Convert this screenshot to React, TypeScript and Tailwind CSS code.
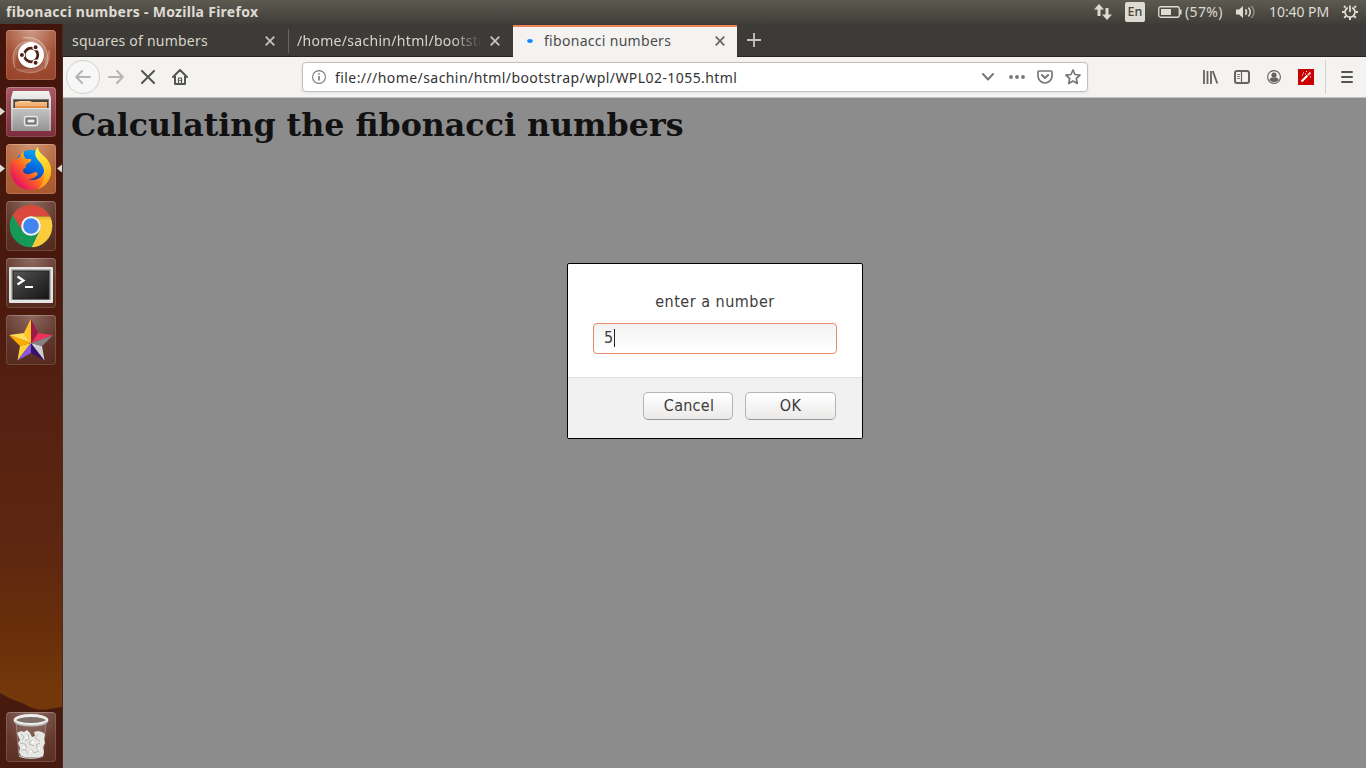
import React from "react";

const Close = ({ color }: { color: string }) => (
  <svg width="10" height="10" viewBox="0 0 10 10" className="shrink-0">
    <path d="M.7.7l8.6 8.6M9.3.7L.7 9.3" stroke={color} strokeWidth="1.7" fill="none" />
  </svg>
);

const Dots = () => (
  <svg width="50" height="50" viewBox="0 0 50 50">
    <defs>
      <clipPath id="ub"><rect x="1" y="1" width="48" height="48" rx="3" /></clipPath>
    </defs>
    <g clipPath="url(#ub)" fill="none" stroke="#fff">
      <path d="M9 38C3 22 12 9 27 12" strokeOpacity=".3" strokeWidth="1.2" />
      <path d="M17 8c18-4 30 14 22 31" strokeOpacity=".35" strokeWidth="1.2" />
      <path d="M43 20c3 19-14 28-33 19" strokeOpacity=".25" strokeWidth="1.2" />
      <path d="M9 38C3 22 12 9 27 12C15 14 9 24 9 38z" fill="#fff" fillOpacity=".15" stroke="none" />
      <path d="M17 8c18-4 30 14 22 31C41 24 32 12 17 8z" fill="#fff" fillOpacity=".18" stroke="none" />
      <path d="M43 20c3 19-14 28-33 19c15 2 27-4 33-19z" fill="#fff" fillOpacity=".15" stroke="none" />
    </g>
    <circle cx="25" cy="26" r="13" fill="#3a1208" opacity=".35" />
    <circle cx="25" cy="25" r="13" fill="#fff" />
    <circle cx="25" cy="25" r="6.8" fill="none" stroke="#4e2013" strokeWidth="2.7" />
    <g stroke="#fff" strokeWidth="1.2" fill="#4e2013">
      <circle cx="15.9" cy="25" r="2.6" />
      <circle cx="29.6" cy="17.2" r="2.6" />
      <circle cx="29.6" cy="32.8" r="2.6" />
    </g>
  </svg>
);

const Files = () => (
  <svg width="50" height="50" viewBox="0 0 50 50">
    <defs>
      <linearGradient id="fa" x2="0" y2="1"><stop stopColor="#f3f3f1" /><stop offset="1" stopColor="#aaa" /></linearGradient>
      <linearGradient id="fb" x2="0" y2="1"><stop stopColor="#c4c4c3" /><stop offset="1" stopColor="#939393" /></linearGradient>
      <linearGradient id="fc" x2="0" y2="1"><stop stopColor="#ffd39c" /><stop offset="1" stopColor="#d9752b" /></linearGradient>
    </defs>
    <path d="M7 4h36l2 7v33H5V11z" fill="url(#fa)" />
    <path d="M7 12h36v31H7z" fill="#777" />
    <path d="M8 13h34v9H8z" fill="#49403a" />
    <path d="M9 15l5-1h10l2 1h15v7H9z" fill="url(#fc)" />
    <path d="M9 18h32" stroke="#f6bd85" />
    <path d="M7 21h36v23H7z" fill="url(#fb)" />
    <path d="M7 21.5h36" stroke="#e4e4e4" />
    <rect x="18.5" y="29.5" width="13" height="9" rx="2" fill="#8b8b8b" stroke="#e7e7e7" strokeWidth="1.4" />
    <rect x="21" y="32" width="8" height="4" fill="#eee" stroke="#5d5d5d" />
  </svg>
);

const Fox = () => (
  <svg width="50" height="50" viewBox="0 0 50 50">
    <defs>
      <linearGradient id="xa" x1=".9" y1=".1" x2=".15" y2=".8"><stop stopColor="#fff04a" /><stop offset=".3" stopColor="#ffc21c" /><stop offset=".6" stopColor="#ff6a20" /><stop offset="1" stopColor="#e8145f" /></linearGradient>
      <linearGradient id="xb" x1=".7" y1="0" x2=".3" y2="1"><stop stopColor="#00a9ff" /><stop offset=".6" stopColor="#0660d8" /><stop offset="1" stopColor="#2b167c" /></linearGradient>
      <linearGradient id="xc" x1=".4" y1="0" x2=".6" y2="1"><stop stopColor="#fff44c" /><stop offset=".6" stopColor="#ffc51e" /><stop offset="1" stopColor="#ff921c" /></linearGradient>
    </defs>
    <circle cx="25" cy="22" r="16" fill="url(#xb)" />
    <path d="M4 23c0-5 2-8 4-10l1 4c1-2 3-3 5-4 0-3 2-5 4-6-1 3 0 6 2 8h5c1 2-1 3-4 5-1 1-2 2-1 4-2 0-3 1-3 3 2 5 8 3 12 1 4 0 3 4 0 5-2 2-5 2-7 2 7 3 15-1 16-8 1-5-1-10-4-13 6 1 9 6 9 9l2 5c-1 10-9 18-20 18C12 46 4 36 4 23z" fill="url(#xa)" />
    <path d="M32 3c0 5 4 7 7 10 4 4 7 9 6 16-1 8-6 14-13 16 6-6 7-12 6-19-1-6-6-9-8-13-2-4 0-8 2-10z" fill="url(#xc)" />
  </svg>
);

const Chrome = () => (
  <svg width="50" height="50" viewBox="0 0 50 50">
    <defs><clipPath id="ch"><circle cx="25" cy="25" r="21.3" /></clipPath></defs>
    <g clipPath="url(#ch)">
      <rect width="50" height="50" fill="#159957" />
      <path d="M25 15.5H50V50H24L33.5 30z" fill="#fdcb3e" />
      <path d="M0 0h50v15.5H25L16.5 30 6.5 14z" fill="#d9473d" />
      <path d="M25 15.5h20v3H28z" fill="#d29c28" opacity=".35" />
    </g>
    <circle cx="25" cy="25" r="9.8" fill="#f4f4f4" />
    <circle cx="25" cy="25" r="7.8" fill="#4285ee" />
  </svg>
);

const Term = () => (
  <svg width="50" height="50" viewBox="0 0 50 50">
    <defs><linearGradient id="ta" x2="1" y2="1"><stop stopColor="#555" /><stop offset=".5" stopColor="#333" /><stop offset="1" stopColor="#151515" /></linearGradient></defs>
    <rect x="3" y="9" width="44" height="36" rx="1" fill="#e4e4e4" />
    <rect x="5" y="11" width="40" height="31" fill="#b2b2b2" />
    <rect x="7" y="13" width="36" height="28" fill="url(#ta)" stroke="#222" />
    <path d="M11.5 18.500l6 4-6 4" fill="none" stroke="#fff" strokeWidth="2.2" />
    <path d="M19 29h8" stroke="#fff" strokeWidth="2" />
  </svg>
);

const Star = () => (
  <svg width="50" height="50" viewBox="0 0 50 50">
    <path d="M25 4v24l-7-10z" fill="#ffd957" />
    <path d="M3 20l15-2 7 10z" fill="#ffdc55" />
    <path d="M3 20l22 8-11 3z" fill="#ffac00" />
    <path d="M11.500 45.500L14 31l11-3z" fill="#ffd338" />
    <path d="M11.500 45.500L25 28v10z" fill="#8859e0" />
    <path d="M25 28l13.500 17.500L25 38z" fill="#35106d" />
    <path d="M25 28l11 3 2.500 14.500z" fill="#cecdd0" />
    <path d="M25 28l22-8-11 11z" fill="#858286" />
    <path d="M25 28l7-10 15 2z" fill="#ec315a" />
    <path d="M25 4l7 14-7 10z" fill="#9c1949" />
    <path d="M25 4l-7 14 7 10z" fill="#ffb400" opacity=".55" />
  </svg>
);

const Trash = () => (
  <svg width="50" height="50" viewBox="0 0 50 50">
    <path d="M10 10l3 34c5 3 19 3 24 0l3-34z" fill="#efe9e7" fillOpacity=".1" stroke="#ddd" strokeOpacity=".35" />
    <g fill="#e6e6e3">
      <path d="M11 21l4-2 3 1 3-2 3 3 2 4 3-1-1-4 4-1 4 1 3 2-1 5 1 4-2 4 1 5-1 4c-6 2-16 2-22 0l-2-4 1-4-2-5 2-3z" />
    </g>
    <path d="M15 22l3 3-2 3M22 22l1 5-4 2M32 22l-3 4 5 3M14 31l5 1 2 4M25 28l-2 4 5 2M34 31l-4 2 2 5M15 39l4-2 3 5M25 37l3 4 5-2" fill="none" stroke="#b9bab4" />
    <path d="M20 25l2 1M26 31l2-1M17 35l2 1M32 36l2 1M24 40l2-1" fill="none" stroke="#fff" strokeWidth="1.500" />
    <path d="M13 44c5 3 19 3 24 0" stroke="#c4d0c8" fill="none" />
    <ellipse cx="25" cy="8" rx="16" ry="4.500" fill="#7d6f69" stroke="#eeeeed" strokeWidth="2.800" />
    <path d="M9 10c4 5 28 5 32 0" stroke="#b9bebb" fill="none" strokeWidth="1.500" />
  </svg>
);

const Tile = ({ children, className }: { children: React.ReactNode; className: string }) => (
  <div className={`h-[50px] w-[50px] shrink-0 overflow-hidden rounded-[4px] shadow-[inset_0_0_0_1px_rgba(255,255,255,.14),inset_0_1px_0_rgba(255,255,255,.12)] ${className}`}>{children}</div>
);

const Arrow = ({ left, top, flip }: { left: string; top: string; flip?: boolean }) => (
  <svg width="5" height="9" viewBox="0 0 5 9" className={`absolute ${left} ${top}`}>
    <path d={flip ? "M5 .5v8L0 4.500z" : "M0 .5v8L5 4.500z"} fill="#dfdbd5" />
  </svg>
);

function Launcher() {
  return (
    <aside className="relative flex w-[63px] shrink-0 flex-col items-center gap-[7px] border-r border-[#4b2a22] bg-[linear-gradient(180deg,#42150c_0%,#4a190d_35%,#542011_50%,#5f2710_72%,#6a300a_83%,#74380a_90%,#74340a_100%)] pt-1.5 pr-px">
      <svg className="absolute bottom-0 left-0" width="62" height="75" viewBox="0 0 62 75">
        <path d="M0 0C6 3 10 6 17 8C24 10 30 15 36 16C46 18 52 15 62 14V75H0z" fill="#471a10" />
      </svg>
      <Tile className="bg-[radial-gradient(circle_at_50%_0%,#cf9a86,#a25035_55%,#96422a)]"><Dots /></Tile>
      <Tile className="bg-[linear-gradient(180deg,#a95a66,#7c2c3b)]"><Files /></Tile>
      <Tile className="bg-[radial-gradient(circle_at_50%_0%,#cf9472,#b06036_65%,#a7582f)]"><Fox /></Tile>
      <Tile className="bg-[radial-gradient(circle_at_50%_0%,#8d6a60,#5f3327_60%,#54291d)]"><Chrome /></Tile>
      <Tile className="bg-[radial-gradient(circle_at_50%_0%,#8d6a60,#5f3327_60%,#54291d)]"><Term /></Tile>
      <Tile className="bg-[radial-gradient(circle_at_50%_0%,#8d6a60,#5f3327_60%,#54291d)]"><Star /></Tile>
      <Tile className="relative mt-auto mb-1.5 bg-[radial-gradient(circle_at_50%_0%,#8d6a60,#653a2e_60%,#5b2f24)]"><Trash /></Tile>
      <Arrow left="left-0" top="top-[83px]" />
      <Arrow left="left-0" top="top-[140px]" />
      <Arrow left="left-[57px]" top="top-[140px]" flip />
    </aside>
  );
}

function TopBar() {
  return (
    <header className="flex h-6 shrink-0 items-center bg-[linear-gradient(180deg,#5d5a50,#3e3d38)] pl-1.5 text-[14px] leading-6 text-[#dfdbd2]">
      <h1 className="w-[260px] text-[14px] font-bold tracking-[0.28px] whitespace-nowrap">fibonacci numbers - Mozilla Firefox</h1>
      <div className="ml-auto flex items-center">
        <svg width="18" height="16" viewBox="0 0 18 16" className="mr-[13px]" fill="#dfdbd2">
          <path d="M5 0l5 5.500H6.500V12h-3V5.500H0zM13 16L8 10.500h3.500V4h3v6.500H18z" />
        </svg>
        <span className="mr-[13px] flex h-5 w-5 items-center justify-center rounded-[2px] bg-[#dfdbd2] text-[12.5px] leading-5 font-medium text-[#45433d]">En</span>
        <svg width="24" height="12" viewBox="0 0 24 12" className="mr-[3px]" fill="#dfdbd2">
          <rect x=".75" y=".75" width="20.500" height="10.500" rx="2" fill="none" stroke="#dfdbd2" strokeWidth="1.300" />
          <path d="M3 3h10v6H3zM22 3.500h1.500v5H22z" />
        </svg>
        <span className="w-[40px] text-[14px] tracking-[0.35px] whitespace-nowrap">(57%)</span>
        <svg width="20" height="16" viewBox="0 0 20 16" className="ml-[11px]" fill="none" stroke="#dfdbd2" strokeWidth="1.300">
          <path d="M0 5.500h3L7 2v12l-4-3.500H0z" fill="#dfdbd2" stroke="none" />
          <path d="M9.500 5.200q2 2.800 0 5.600M12.500 3.500q3.500 4.500 0 9" strokeWidth="1.600" />
          <path d="M15.500 2q5 6 0 12" stroke="#8d8a82" strokeWidth="1.500" />
        </svg>
        <span className="ml-[13px] w-[61px] text-[14px] tracking-[-0.05px] whitespace-nowrap">10:40 PM</span>
        <svg width="16" height="16" viewBox="0 0 16 16" className="mr-2 ml-3" fill="none" stroke="#dfdbd2">
          <path d="M5.800 3.600a5 5 0 1 0 4.400 0" strokeWidth="1.800" />
          <path d="M8 1.500V8" strokeWidth="1.800" />
          <path d="M3.600 3.600L2 2M12.400 3.600L14 2M2.500 8H0M13.500 8H16M4 12l-1.800 1.800M12 12l1.800 1.800M8 13.500V16" strokeWidth="2" />
        </svg>
      </div>
    </header>
  );
}

function Tabs() {
  return (
    <div className="flex h-[33px] shrink-0 border-b border-[#252420] bg-[#3c3b37] text-[14px] leading-[32px] text-[#d8d4cb]">
      <div className="flex w-[225px] items-center pt-px pr-[13px] pl-[9px]">
        <span className="flex-1 tracking-[0.22px] whitespace-nowrap">squares of numbers</span>
        <Close color="#c9c5bd" />
      </div>
      <div className="flex w-[224px] items-center pt-px pr-[12px]">
        <i className="h-6 w-px bg-[#68665f]" />
        <span className="mr-2 ml-2 w-[185px] overflow-hidden mask-[linear-gradient(90deg,#000_84%,transparent)] tracking-[0.3px] whitespace-nowrap">/home/sachin/html/bootstr</span>
        <Close color="#c9c5bd" />
      </div>
      <div className="-mb-px ml-px flex h-[32px] w-[224px] items-center self-end border-t-2 border-[#ee8055] bg-[#f4f3f2] pr-[12px] pb-[2px] pl-[14px] leading-[26px] text-[#4c4c4c]">
        <svg width="6" height="4" viewBox="0 0 6 4" className="mr-[11px]"><ellipse cx="3" cy="2" rx="2.800" ry="1.900" fill="#1489ff" /></svg>
        <span className="-mt-px flex-1 tracking-[0.3px] whitespace-nowrap">fibonacci numbers</span>
        <Close color="#666662" />
      </div>
      <svg width="14" height="14" viewBox="0 0 14 14" className="mt-[9px] ml-[10px]"><path d="M7 0v14M0 7h14" stroke="#c9c5bd" strokeWidth="1.800" /></svg>
    </div>
  );
}

function Toolbar() {
  return (
    <div className="flex h-[41px] shrink-0 items-center border-b border-[#c4c3c2] bg-[#f4f3f2]">
      <span className="ml-[3px] flex h-[34px] w-[34px] items-center justify-center rounded-full border border-[#d1d0cf] bg-[#f8f7f7]">
        <svg width="16" height="14" viewBox="0 0 16 14" fill="none" stroke="#b6b5b4" strokeWidth="2" strokeLinecap="round" strokeLinejoin="round"><path d="M15 7H1.500M7 1L1.200 7 7 13" /></svg>
      </span>
      <svg width="16" height="14" viewBox="0 0 16 14" className="ml-[8px]" fill="none" stroke="#b6b5b4" strokeWidth="2" strokeLinecap="round" strokeLinejoin="round"><path d="M1 7h13.500M9 1l5.800 6L9 13" /></svg>
      <svg width="14" height="14" viewBox="0 0 14 14" className="ml-[17px]" stroke="#555552" strokeWidth="2" strokeLinecap="round"><path d="M1 1l12 12M13 1L1 13" /></svg>
      <svg width="16" height="16" viewBox="0 0 16 16" className="ml-[17px]" fill="none" stroke="#555552" strokeWidth="2" strokeLinejoin="round" strokeLinecap="round">
        <path d="M1 8l7-7 7 7M3 7v8h10V7" /><path d="M6.500 9h3v5.500h-3z" strokeWidth="1.200" /><path d="M8 11.500h1" strokeWidth="1" />
      </svg>
      <div className="ml-[114px] flex h-[30px] w-[786px] items-center rounded-[4px] border border-[#c2c0be] bg-white pr-[6px] pl-[9px] shadow-[0_1px_3px_rgba(0,0,0,.08)]">
        <svg width="14" height="14" viewBox="0 0 14 14" fill="none" stroke="#787878"><circle cx="7" cy="7" r="6.400" strokeWidth="1.100" /><path d="M7 6v4.500M7 3.200v1.500" strokeWidth="1.600" /></svg>
        <span className="mt-0.5 ml-[9px] flex-1 text-[14px] leading-[26px] tracking-[0.43px] whitespace-nowrap text-[#333]">file:///home/sachin/html/bootstrap/wpl/WPL02-1055.html</span>
        <svg width="12" height="8" viewBox="0 0 12 8" fill="none" stroke="#777" strokeWidth="1.900" strokeLinecap="round" strokeLinejoin="round"><path d="M1 1l5 5.500L11 1" /></svg>
        <svg width="16" height="4" viewBox="0 0 16 4" className="ml-[15px]" fill="#777"><circle cx="2" cy="2" r="1.900" /><circle cx="8" cy="2" r="1.900" /><circle cx="14" cy="2" r="1.900" /></svg>
        <svg width="16" height="14" viewBox="0 0 16 14" className="ml-[12px]" fill="none" stroke="#777" strokeLinecap="round" strokeLinejoin="round"><path d="M2 1h12q1 0 1 1v4a7 7 0 0 1-14 0V2q0-1 1-1z" strokeWidth="1.700" /><path d="M4.800 5L8 8l3.200-3" strokeWidth="1.900" /></svg>
        <svg width="16" height="16" viewBox="0 0 16 16" className="ml-[12px]" fill="none" stroke="#777" strokeWidth="1.700" strokeLinejoin="round"><path d="M8 1l2 4.500 5 .6-3.700 3.400 1 5L8 12l-4.300 2.500 1-5L1 6.100l5-.6z" /></svg>
      </div>
      <svg width="16" height="14" viewBox="0 0 16 14" className="ml-[114px]" fill="none" stroke="#656461" strokeWidth="1.800"><path d="M2 0v14M5.500 1v13M9 1v13" /><path d="M10.800 1L15.300 13.500" /></svg>
      <svg width="16" height="14" viewBox="0 0 16 14" className="ml-4" fill="none" stroke="#656461"><rect x="1" y="1" width="14" height="12" rx="2" strokeWidth="2" /><path d="M7.500 1v12" strokeWidth="1.200" /><path d="M3 4.500h3M3 6.500h3M3 8.500h3" strokeWidth=".8" /></svg>
      <svg width="14" height="14" viewBox="0 0 14 14" className="ml-[17px]"><circle cx="7" cy="7" r="6.400" fill="none" stroke="#656461" strokeWidth="1.100" /><circle cx="7" cy="5" r="2.600" fill="#656461" /><path d="M2.500 10c0-2 2-2.500 3-2.500h3c1 0 3 .5 3 2.500-2 2.800-7 2.800-9 0z" fill="#656461" /></svg>
      <svg width="16" height="16" viewBox="0 0 16 16" className="ml-[17px]"><path d="M0 0h16v16H0z" fill="#c80000" /><path d="M3.500 12.500L9.500 6.500" stroke="#fff" strokeWidth="2.200" /><path d="M10 6L12.500 3.500" stroke="#f5bcbc" strokeWidth="2.200" /><path d="M5 4h1M8 2.500h1M4 6h1M7 5h1M12 8h1" stroke="#fff" /></svg>
      <i className="ml-[11px] h-[34px] w-px bg-[#d4d3d2]" />
      <svg width="12" height="12" viewBox="0 0 12 12" className="ml-[15px]" stroke="#555552" strokeWidth="2" strokeLinecap="round"><path d="M1 1h10M1 6h10M1 11h10" /></svg>
    </div>
  );
}

function Prompt() {
  return (
    <section className="absolute top-[165px] left-[504px] flex h-[176px] w-[296px] flex-col overflow-hidden rounded-[2px] border border-black bg-white font-['DejaVu_Sans_Condensed','DejaVu_Sans',sans-serif] text-[16px] text-[#3c3c3c] [font-stretch:condensed]">
      <p className="mt-[28px] text-center leading-5 tracking-[0.5px] whitespace-nowrap">enter a number</p>
      <div className="mx-[25px] mt-[11px] flex h-[31px] items-center rounded-[4px] border border-[#e48b69] bg-[linear-gradient(180deg,#f2f2f2,#fff_90%)] pl-[10px] leading-[27px]">
        <span className="-mt-0.5 w-[10px]">5</span><i className="-mt-0.5 h-[18px] w-px bg-[#222]" />
      </div>
      <div className="mt-[23px] flex flex-1 gap-3 border-t border-[#dedede] bg-[#f1f1f1] pt-[14px] pl-[75px]">
        <button className="h-[28px] w-[90px] rounded-[5px] border border-[#b4b4b2] border-b-[#979795] bg-[linear-gradient(180deg,#fff,#ebeae9)] pl-0.5 text-center leading-[24px] tracking-[0.25px]">Cancel</button>
        <button className="h-[28px] w-[91px] rounded-[5px] border border-[#b4b4b2] border-b-[#979795] bg-[linear-gradient(180deg,#fff,#ebeae9)] text-center leading-[24px] tracking-[0.25px]">OK</button>
      </div>
    </section>
  );
}

export default function App() {
  return (
    <div className="flex h-[768px] w-[1366px] flex-col overflow-hidden font-['Noto_Sans','Liberation_Sans',sans-serif]">
      <TopBar />
      <div className="flex min-h-0 flex-1">
        <Launcher />
        <main className="flex min-w-0 flex-1 flex-col">
          <Tabs />
          <Toolbar />
          <div className="relative flex-1 bg-[#8c8c8c]">
            <h2 className="pt-2 pl-2 font-['DejaVu_Serif','Liberation_Serif',serif] text-[31.7px] leading-[38px] font-bold whitespace-nowrap text-[#111]">Calculating the fibonacci numbers</h2>
            <Prompt />
          </div>
        </main>
      </div>
    </div>
  );
}
